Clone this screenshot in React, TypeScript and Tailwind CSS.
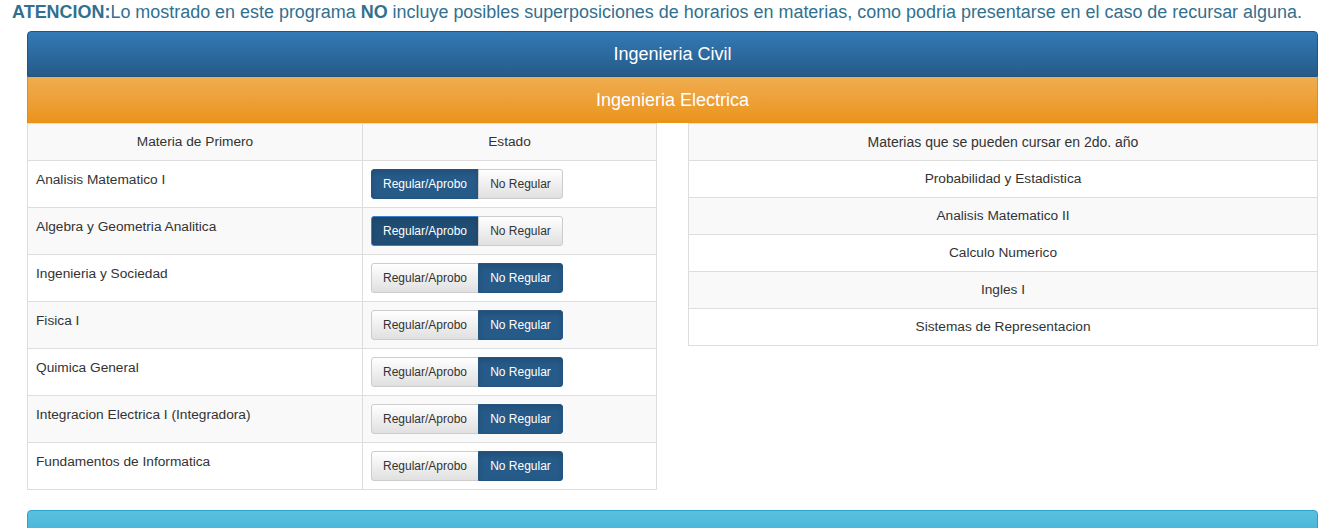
import React from "react";

const materias = [
  { name: "Analisis Matematico I", regular: true },
  { name: "Algebra y Geometria Analitica", regular: true, focus: true },
  { name: "Ingenieria y Sociedad", regular: false },
  { name: "Fisica I", regular: false },
  { name: "Quimica General", regular: false },
  { name: "Integracion Electrica I (Integradora)", regular: false },
  { name: "Fundamentos de Informatica", regular: false },
];

const segundo = [
  "Probabilidad y Estadistica",
  "Analisis Matematico II",
  "Calculo Numerico",
  "Ingles I",
  "Sistemas de Representacion",
];

const activeBtn =
  "bg-[#265a88] text-white border border-[#245580] shadow-[inset_0_3px_5px_rgba(0,0,0,0.125)]";
const idleBtn =
  "bg-gradient-to-b from-white to-[#e0e0e0] text-[#333] border border-[#ccc]";

const Toggle = ({ regular, focus }: { regular: boolean; focus?: boolean }) => (
  <div className="flex h-[30px] text-[12px]">
    <button
      className={`w-[108px] rounded-l-[3px] ${regular ? activeBtn : idleBtn} ${
        focus ? "!bg-[#204d74] !border-[#3a7fd0]" : ""
      }`}
    >
      Regular/Aprobo
    </button>
    <button
      className={`w-[85px] rounded-r-[3px] -ml-px ${regular ? idleBtn : activeBtn}`}
    >
      No Regular
    </button>
  </div>
);

export default function App() {
  return (
    <div
      className="w-[1338px] h-[528px] overflow-hidden bg-white text-[13.7px] text-[#333]"
      style={{ fontFamily: '"Liberation Sans", Arial, sans-serif' }}
    >
      <p className="text-[17.95px] leading-[20px] text-[#31708f] text-center pt-[2px] pr-[24px] whitespace-nowrap">
        <b>ATENCION:</b>Lo mostrado en este programa <b>NO</b> incluye posibles
        superposiciones de horarios en materias, como podria presentarse en el caso
        de recursar alguna.
      </p>
      <div className="mx-[27px] mt-[9px] w-[1291px]">
        <div className="h-[46px] flex items-center justify-center rounded-t-[4px] bg-gradient-to-b from-[#337ab7] to-[#265a88] border border-[#245580] text-white text-[18px]">
          Ingenieria Civil
        </div>
        <div className="h-[46px] flex items-center justify-center bg-gradient-to-b from-[#f0ad4e] to-[#eb9316] border-x border-[#e38d13] text-white text-[18px]">
          Ingenieria Electrica
        </div>
        <div className="flex gap-[31px]">
          <table className="w-[630px] border-collapse border border-[#ddd]">
            <thead>
              <tr className="bg-[#f9f9f9] h-[37px]">
                <th className="font-normal border border-[#ddd] w-[335px]">Materia de Primero</th>
                <th className="font-normal border border-[#ddd]">Estado</th>
              </tr>
            </thead>
            <tbody>
              {materias.map((m, i) => (
                <tr
                  key={m.name}
                  className={`h-[47px] ${i % 2 === 1 ? "bg-[#f9f9f9]" : "bg-white"}`}
                >
                  <td className="border border-[#ddd] align-top pt-[9px] px-[8px]">
                    {m.name}
                  </td>
                  <td className="border border-[#ddd] px-[8px]">
                    <Toggle regular={m.regular} focus={m.focus} />
                  </td>
                </tr>
              ))}
            </tbody>
          </table>
          <table className="w-[630px] self-start border-collapse border border-[#ddd]">
            <thead>
              <tr className="bg-[#f9f9f9] h-[37px]">
                <th className="font-normal border border-[#ddd] text-[14px]">
                  Materias que se pueden cursar en 2do. año
                </th>
              </tr>
            </thead>
            <tbody>
              {segundo.map((s, i) => (
                <tr
                  key={s}
                  className={`h-[37px] ${i % 2 === 1 ? "bg-[#f9f9f9]" : "bg-white"}`}
                >
                  <td className="border border-[#ddd] text-center">{s}</td>
                </tr>
              ))}
            </tbody>
          </table>
        </div>
        <div className="mt-[20px] h-[46px] flex items-start justify-center pt-[12px] rounded-t-[4px] bg-gradient-to-b from-[#5bc0de] to-[#2aabd2] border border-[#28a4c9] text-white text-[18px]">
          Ingenieria Industrial
        </div>
      </div>
    </div>
  );
}
